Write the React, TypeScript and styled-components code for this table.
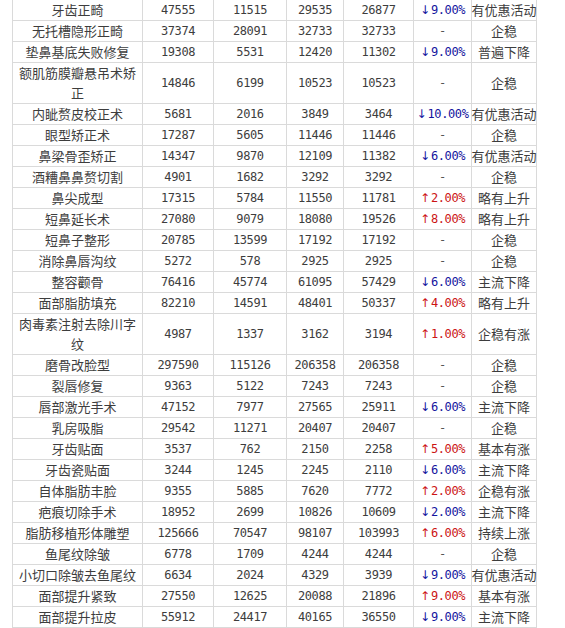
import React from "react";
import styled, { createGlobalStyle } from "styled-components";

const Global = createGlobalStyle`
  html, body { margin: 0; padding: 0; background: #fff; }
  body { font-family: "Noto Sans CJK SC", "Noto Sans", sans-serif; }
`;

const Page = styled.div`
  padding-left: 12px;
  width: 553px;
  height: 628px;
  overflow: hidden;
`;

const Grid = styled.div`
  display: grid;
  grid-template-columns: 129px 70px 72px 56px 69px 57px 64px;
  gap: 1px;
  padding: 0 1px 1px 1px;
  background: #dadada;
  width: 523px;
`;

const Row = styled.div`
  display: contents;
`;

const Cell = styled.div`
  background: #fff;
  color: #3d3d3d;
  font-size: 13px;
  line-height: 20px;
  min-height: 20px;
  text-align: center;
  display: flex;
  align-items: center;
  justify-content: center;
  white-space: nowrap;
`;

const NameCell = styled(Cell)`
  white-space: normal;
  padding: 0 4px;
`;

const Num = styled.span`
  font-family: "DejaVu Sans Mono", monospace;
  font-size: 12px;
  letter-spacing: -0.4px;
  color: #3d3d3d;
`;

const Trend = styled.span<{ $dir: "up" | "down" }>`
  color: ${(p) => (p.$dir === "up" ? "#cc1414" : "#14149e")};
  display: inline-flex;
  align-items: center;
  gap: 1px;
`;

const Arrow = styled.span`
  font-family: "DejaVu Sans", sans-serif;
  font-size: 12px;
  display: inline-block;
`;

const Pct = styled.span`
  font-family: "DejaVu Sans Mono", monospace;
  font-size: 12px;
  letter-spacing: -0.4px;
`;

const Dash = styled.span`
  font-family: "DejaVu Sans Mono", monospace;
  font-size: 12px;
  color: #555;
`;

type R = [string, string, string, string, string, string, string];

const rows: R[] = [
  ["牙齿正畸", "47555", "11515", "29535", "26877", "-9", "有优惠活动"],
  ["无托槽隐形正畸", "37374", "28091", "32733", "32733", "", "企稳"],
  ["垫鼻基底失败修复", "19308", "5531", "12420", "11302", "-9", "普遍下降"],
  ["额肌筋膜瓣悬吊术矫正", "14846", "6199", "10523", "10523", "", "企稳"],
  ["内眦赘皮校正术", "5681", "2016", "3849", "3464", "-10", "有优惠活动"],
  ["眼型矫正术", "17287", "5605", "11446", "11446", "", "企稳"],
  ["鼻梁骨歪矫正", "14347", "9870", "12109", "11382", "-6", "有优惠活动"],
  ["酒糟鼻鼻赘切割", "4901", "1682", "3292", "3292", "", "企稳"],
  ["鼻尖成型", "17315", "5784", "11550", "11781", "+2", "略有上升"],
  ["短鼻延长术", "27080", "9079", "18080", "19526", "+8", "略有上升"],
  ["短鼻子整形", "20785", "13599", "17192", "17192", "", "企稳"],
  ["消除鼻唇沟纹", "5272", "578", "2925", "2925", "", "企稳"],
  ["整容颧骨", "76416", "45774", "61095", "57429", "-6", "主流下降"],
  ["面部脂肪填充", "82210", "14591", "48401", "50337", "+4", "略有上升"],
  ["肉毒素注射去除川字纹", "4987", "1337", "3162", "3194", "+1", "企稳有涨"],
  ["磨骨改脸型", "297590", "115126", "206358", "206358", "", "企稳"],
  ["裂唇修复", "9363", "5122", "7243", "7243", "", "企稳"],
  ["唇部激光手术", "47152", "7977", "27565", "25911", "-6", "主流下降"],
  ["乳房吸脂", "29542", "11271", "20407", "20407", "", "企稳"],
  ["牙齿贴面", "3537", "762", "2150", "2258", "+5", "基本有涨"],
  ["牙齿瓷贴面", "3244", "1245", "2245", "2110", "-6", "主流下降"],
  ["自体脂肪丰脸", "9355", "5885", "7620", "7772", "+2", "企稳有涨"],
  ["疤痕切除手术", "18952", "2699", "10826", "10609", "-2", "主流下降"],
  ["脂肪移植形体雕塑", "125666", "70547", "98107", "103993", "+6", "持续上涨"],
  ["鱼尾纹除皱", "6778", "1709", "4244", "4244", "", "企稳"],
  ["小切口除皱去鱼尾纹", "6634", "2024", "4329", "3939", "-9", "有优惠活动"],
  ["面部提升紧致", "27550", "12625", "20088", "21896", "+9", "基本有涨"],
  ["面部提升拉皮", "55912", "24417", "40165", "36550", "-9", "主流下降"],
];

function TrendCell({ v }: { v: string }) {
  if (!v) return <Cell><Dash>-</Dash></Cell>;
  const up = v.startsWith("+");
  const n = v.slice(1);
  return (
    <Cell>
      <Trend $dir={up ? "up" : "down"}>
        <Arrow>{up ? "↑" : "↓"}</Arrow>
        <Pct>{n}.00%</Pct>
      </Trend>
    </Cell>
  );
}

export default function App() {
  return (
    <Page>
      <Global />
      <Grid>
        {rows.map((r, i) => (
          <Row key={i}>
            <NameCell>{r[0]}</NameCell>
            <Cell><Num>{r[1]}</Num></Cell>
            <Cell><Num>{r[2]}</Num></Cell>
            <Cell><Num>{r[3]}</Num></Cell>
            <Cell><Num>{r[4]}</Num></Cell>
            <TrendCell v={r[5]} />
            <Cell>{r[6]}</Cell>
          </Row>
        ))}
      </Grid>
    </Page>
  );
}
